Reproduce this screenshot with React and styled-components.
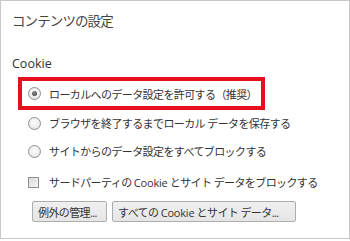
import React from "react";
import styled, { createGlobalStyle } from "styled-components";

const Global = createGlobalStyle`
  html, body { margin: 0; padding: 0; background: #fff; }
  body { width: 350px; height: 241px; overflow: hidden; }
`;

const Panel = styled.div`
  box-sizing: border-box;
  width: 350px;
  height: 239px;
  border: 1px solid #c8c8c8;
  padding: 10px 0 0 11px;
  display: flex;
  flex-direction: column;
  font-family: "Open Sans", "Noto Sans CJK JP", sans-serif;
  color: #333;
`;

const Title = styled.div`
  height: 20px;
  line-height: 20px;
  font-size: 13.5px;
  letter-spacing: -0.9px;
  color: #444;
`;

const Section = styled.div`
  margin-top: 23px;
  height: 20px;
  line-height: 20px;
  font-size: 12.5px;
  color: #333;
`;

const Highlight = styled.div`
  box-sizing: border-box;
  margin: 3px 0 0 6px;
  width: 247px;
  height: 33px;
  border: 4px solid #e50f1e;
  padding-left: 6px;
  display: flex;
  align-items: center;
`;

const Row = styled.div`
  display: flex;
  align-items: center;
  height: 20px;
  margin-top: ${(p) => p.$mt}px;
  margin-left: ${(p) => (p.$inBox ? 0 : 16)}px;
`;

const Radio = styled.span`
  box-sizing: border-box;
  width: 13px;
  height: 13px;
  border-radius: 50%;
  border: 1px solid #8f9090;
  background: radial-gradient(circle at 50% 40%, #fdfdfd 0%, #ececec 60%, #d8d8d8 100%);
  display: flex;
  align-items: center;
  justify-content: center;
  flex: none;
  &::after {
    content: "";
    display: ${(p) => (p.$checked ? "block" : "none")};
    width: 5px;
    height: 5px;
    border-radius: 50%;
    background: radial-gradient(circle at 40% 35%, #8a8a8a, #3c3c3c);
  }
`;

const Check = styled.span`
  box-sizing: border-box;
  width: 11px;
  height: 11px;
  margin-left: 0;
  border: 1px solid #8f9090;
  background: linear-gradient(135deg, #d9d9d9, #f6f6f6);
  flex: none;
`;

const Label = styled.span`
  margin-left: ${(p) => p.$gap}px;
  font-size: 11px;
  letter-spacing: -0.6px;
  white-space: nowrap;
  color: #333;
`;

const Latin = styled.span`
  letter-spacing: -0.2px;
`;

const Buttons = styled.div`
  display: flex;
  gap: 5px;
  margin: 9px 0 0 20px;
`;

const Button = styled.button`
  box-sizing: border-box;
  height: 21px;
  width: ${(p) => p.$w}px;
  padding: 0 0 0 5px;
  text-align: left;
  border: 1px solid #adadad;
  border-radius: 2px;
  background: linear-gradient(#f0f0f0, #e5e5e5);
  font-family: "Open Sans", "Noto Sans CJK JP", sans-serif;
  font-size: 11px;
  letter-spacing: -0.6px;
  color: #333;
  white-space: nowrap;
`;

export default function App() {
  return (
    <>
      <Global />
      <Panel>
        <Title>コンテンツの設定</Title>
        <Section>Cookie</Section>
        <Highlight>
          <Row $inBox $mt={0}>
            <Radio $checked />
            <Label $gap={8}>ローカルへのデータ設定を許可する（推奨）</Label>
          </Row>
        </Highlight>
        <Row $mt={3}>
          <Radio />
          <Label $gap={8}>ブラウザを終了するまでローカル データを保存する</Label>
        </Row>
        <Row $mt={8}>
          <Radio />
          <Label $gap={8}>サイトからのデータ設定をすべてブロックする</Label>
        </Row>
        <Row $mt={11}>
          <Check />
          <Label $gap={10}>
            サードパーティの <Latin>Cookie</Latin> とサイト データをブロックする
          </Label>
        </Row>
        <Buttons>
          <Button $w={75}>例外の管理...</Button>
          <Button $w={184}>
            すべての <Latin>Cookie</Latin> とサイト データ...
          </Button>
        </Buttons>
      </Panel>
    </>
  );
}
